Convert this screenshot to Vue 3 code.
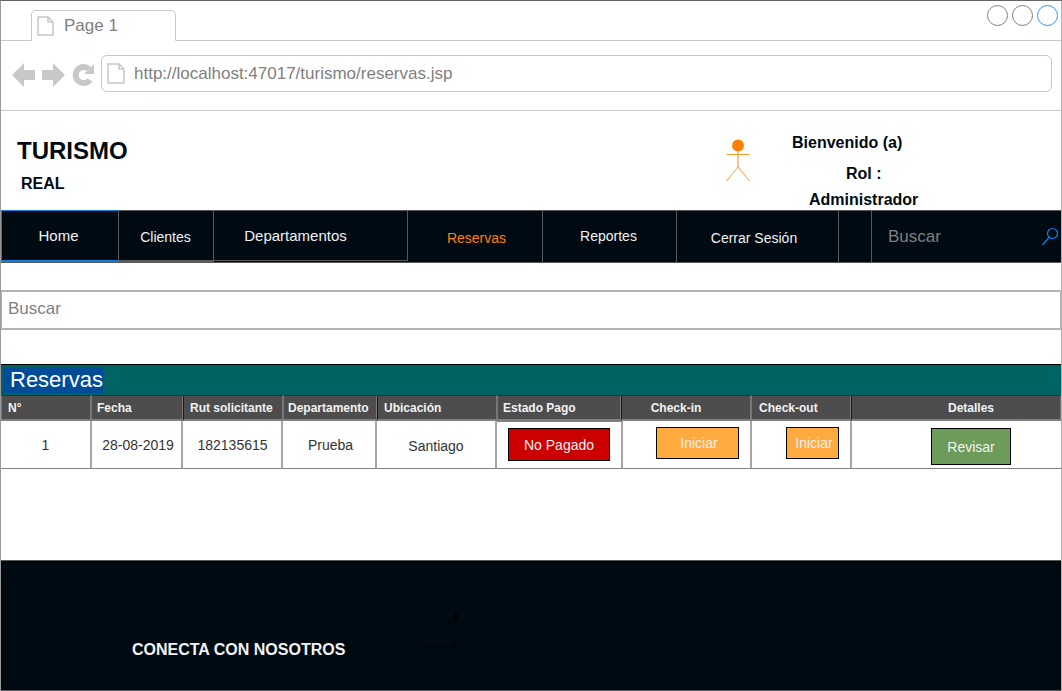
<script setup>
const navItems = [
  { label: 'Home', cls: 'home' },
  { label: 'Clientes', cls: 'clientes' },
  { label: 'Departamentos', cls: 'deptos' },
  { label: 'Reservas', cls: 'reservas' },
  { label: 'Reportes', cls: 'reportes' },
  { label: 'Cerrar Sesión', cls: 'cerrar' },
  { label: '', cls: 'blank' }
]
const headers = [
  { label: 'N°', cls: 'h-n' },
  { label: 'Fecha', cls: 'h-fecha' },
  { label: 'Rut solicitante', cls: 'h-rut' },
  { label: 'Departamento', cls: 'h-depto' },
  { label: 'Ubicación', cls: 'h-ubi' },
  { label: 'Estado Pago', cls: 'h-estado' },
  { label: 'Check-in', cls: 'h-in' },
  { label: 'Check-out', cls: 'h-out' },
  { label: 'Detalles', cls: 'h-det' }
]
const cells = [
  { label: '1', cls: 'c-n' },
  { label: '28-08-2019', cls: '' },
  { label: '182135615', cls: 'c-rut' },
  { label: 'Prueba', cls: '' },
  { label: 'Santiago', cls: 'c-ubi' }
]
</script>

<template>
  <div class="page">
    <div class="tabbar">
      <div class="tab">
        <svg class="doc" width="17" height="20" viewBox="0 0 17 20">
          <path d="M1 1H11L16 6V19H1Z M11 1V6H16" fill="#fff" stroke="#c8c8c8" stroke-width="1.5" />
        </svg>
        <span>Page 1</span>
      </div>
      <div class="winbtns">
        <span class="dot"></span>
        <span class="dot"></span>
        <span class="dot blue"></span>
      </div>
    </div>

    <div class="toolbar">
      <svg class="navicons" width="84" height="26" viewBox="0 0 84 26">
        <path d="M0 13L12 1V8H23V18H12V25Z" fill="#c8c8c8" />
        <path d="M53 13L41 1V8H30V18H41V25Z" fill="#c8c8c8" />
        <path d="M77 7A8 8 0 1 0 78 18" fill="none" stroke="#c8c8c8" stroke-width="6" />
        <path d="M82 2V12H72Z" fill="#c8c8c8" />
      </svg>
      <div class="address">
        <svg class="doc" width="18" height="21" viewBox="0 0 18 21">
          <path d="M1 1H12L17 6V20H1Z M12 1V6H17" fill="#fff" stroke="#c8c8c8" stroke-width="1.500" />
        </svg>
        <span>http://localhost:47017/turismo/reservas.jsp</span>
      </div>
    </div>

    <header class="brand">
      <div class="logo">
        <div class="logo-main">TURISMO</div>
        <div class="logo-sub">REAL</div>
      </div>
      <svg class="actor" width="26" height="44" viewBox="0 0 26 44">
        <circle cx="13" cy="6.500" r="6" fill="#ff8000" />
        <path d="M13 12V29" stroke="#ffb366" stroke-width="1.500" fill="none" />
        <path d="M1.500 15.500H24.500M1.500 42L13 28L24.500 42" stroke="#ff9a33" stroke-width="1" fill="none" />
      </svg>
      <div class="welcome">
        <div class="w-hello">Bienvenido (a)</div>
        <div class="w-rol">Rol :</div>
        <div class="w-admin">Administrador</div>
      </div>
    </header>

    <nav class="nav">
      <div v-for="item in navItems" :key="item.cls" class="nav-item" :class="item.cls">{{ item.label }}</div>
      <div class="nav-search">
        <span>Buscar</span>
        <svg width="18" height="20" viewBox="0 0 18 20">
          <circle cx="11.500" cy="6.500" r="5" fill="none" stroke="#0a7fe0" stroke-width="1.200" />
          <path d="M8 10.500L1.500 18" stroke="#0a7fe0" stroke-width="1.200" />
        </svg>
      </div>
    </nav>

    <div class="search">Buscar</div>

    <section class="panel">
      <div class="panel-title"><span>Reservas</span></div>
      <div class="thead">
        <div v-for="h in headers" :key="h.label" class="th" :class="h.cls">{{ h.label }}</div>
      </div>
      <div class="tbody">
        <div v-for="c in cells" :key="c.label" class="td" :class="c.cls">{{ c.label }}</div>
        <div class="td c-estado"><span class="btn red">No Pagado</span></div>
        <div class="td c-in"><span class="btn orange wide">Iniciar</span></div>
        <div class="td c-out"><span class="btn orange narrow">Iniciar</span></div>
        <div class="td c-det"><span class="btn green">Revisar</span></div>
      </div>
    </section>

    <footer class="footer">
      <span>CONECTA CON NOSOTROS</span>
      <svg width="40" height="38" viewBox="0 0 40 38">
        <path d="M0 36H37V6" fill="none" stroke="#000" stroke-width="1" />
        <path d="M33.500 7L37 0L40.500 7Z" fill="#000" />
      </svg>
    </footer>
  </div>
</template>

<style>
html, body { margin: 0; background: #fff; }
</style>

<style scoped>
.page {
  box-sizing: border-box;
  width: 1062px;
  height: 691px;
  overflow: hidden;
  background: #fff;
  border-top: 1px solid #666;
  border-left: 1px solid #999;
  border-right: 1px solid #b3b3b3;
  font-family: "Liberation Sans", Arial, sans-serif;
  color: #000a12;
  display: flex;
  flex-direction: column;
}
.tabbar {
  box-sizing: border-box;
  height: 40px;
  flex: none;
  border-bottom: 1px solid #c8c8c8;
  display: flex;
  justify-content: space-between;
  padding: 9px 0 0 30px;
}
.tab {
  box-sizing: border-box;
  width: 145px;
  height: 31px;
  border: 1px solid #c8c8c8;
  border-bottom: 1px solid #fff;
  border-radius: 5px 5px 0 0;
  display: flex;
  align-items: center;
  color: #808080;
  font-size: 17px;
  padding: 1px 0 0 5px;
}
.tab .doc { margin-right: 10px; }
.winbtns {
  display: flex;
  gap: 4px;
  margin: -5px 3px 0 0;
}
.dot {
  box-sizing: border-box;
  width: 21px;
  height: 21px;
  border: 1px solid #808080;
  border-radius: 50%;
}
.dot.blue { border-color: #2f9be8; }
.toolbar {
  box-sizing: border-box;
  height: 70px;
  flex: none;
  border-bottom: 1px solid #c8c8c8;
  display: flex;
  align-items: flex-start;
  padding: 14px 9px 0 11px;
}
.navicons { margin: 7px 5px 0 0; flex: none; }
.address {
  box-sizing: border-box;
  flex: 1;
  height: 37px;
  border: 1px solid #c8c8c8;
  border-radius: 6px;
  display: flex;
  align-items: center;
  padding-left: 5px;
  color: #808080;
  font-size: 17px;
}
.address .doc { margin-right: 9px; }
.brand {
  height: 99px;
  flex: none;
  display: flex;
  align-items: flex-start;
  font-weight: bold;
}
.logo { width: 709px; padding: 26px 0 0 16px; box-sizing: border-box; flex: none; }
.logo-main { font-size: 24px; line-height: 28px; }
.logo-sub { font-size: 16px; line-height: 18px; margin: 10px 0 0 4px; }
.actor { flex: none; margin: 28px 0 0 15px; }
.welcome {
  width: 140px;
  margin-left: 41px;
  font-size: 16px;
  line-height: 18px;
  text-align: left;
}
.w-hello { padding-top: 23px; white-space: nowrap; }
.w-rol { padding-top: 13px; margin-left: 54px; }
.w-admin { padding-top: 8px; margin-left: 17px; white-space: nowrap; }
.nav {
  box-sizing: border-box;
  height: 53px;
  flex: none;
  background: #000a12;
  border-top: 1px solid #5a5a5a;
  border-bottom: 1px solid #5a5a5a;
  display: flex;
  color: #f2f2f2;
}
.nav-item {
  box-sizing: border-box;
  flex: none;
  display: flex;
  align-items: center;
  justify-content: center;
  border-right: 1px solid #5a5a5a;
  font-size: 14px;
}
.home {
  width: 118px;
  height: 52px;
  margin-top: -1px;
  font-size: 15px;
  padding: 0 3px 0 0;
  border-bottom: 2px solid #0a7fe0;
  border-right: 1px solid #5a5a5a;
  border-left: 1px solid #0a7fe0;
  border-top: 1px solid #0a7fe0;
}
.clientes { width: 95px; padding: 3px 1px 0 0; height: 51px; border-bottom: 2px solid #5a5a5a; }
.deptos { width: 194px; font-size: 15px; padding: 0 30px 0 0; height: 50px; border-bottom: 1px solid #5a5a5a; }
.reservas { width: 135px; color: #ff8000; padding: 3px 0 0 3px; }
.reportes { width: 134px; padding: 0 2px 2px 0; }
.cerrar { width: 162px; padding: 2px 7px 0 0; }
.blank { width: 33px; }
.nav-search {
  flex: 1;
  display: flex;
  align-items: center;
  justify-content: space-between;
  padding: 0 2px 0 16px;
  color: #808080;
  font-size: 17px;
}
.search {
  box-sizing: border-box;
  height: 40px;
  flex: none;
  margin-top: 27px;
  border: 2px solid #b3b3b3;
  border-left-width: 1px;
  border-right-width: 1px;
  color: #808080;
  font-size: 17px;
  display: flex;
  align-items: center;
  padding: 0 0 2px 6px;
}
.panel { margin-top: 34px; flex: none; height: 196px; }
.panel-title {
  box-sizing: border-box;
  height: 31px;
  background: #006363;
  border-top: 1px solid #000;
  padding: 2px 0 0 2px;
}
.panel-title span {
  display: inline-block;
  height: 26px;
  line-height: 26px;
  background: #004c99;
  color: #fff;
  font-size: 22px;
  padding: 0 0 0 7px;
}
.thead, .tbody { display: grid; }
.thead {
  height: 26px;
  grid-template-columns: 90px 92px 100px 94px 120px 124px 130px 100px 1fr;
}
.tbody {
  height: 47px;
  grid-template-columns: 91px 91px 100px 94px 120px 126px 129px 100px 1fr;
}
.th {
  box-sizing: border-box;
  background: #4d4d4d;
  color: #f2f2f2;
  border: 1px solid #777;
  border-top-color: #2a2a2a;
  border-bottom: 2px solid #808080;
  font-size: 12px;
  font-weight: bold;
  display: flex;
  align-items: center;
  padding: 0 0 0 5px;
  white-space: nowrap;
}
.h-rut, .h-ubi, .h-in, .h-det { border-left-color: #1a1a1a; }
.h-n, .h-rut, .h-ubi { padding-left: 6px; }
.h-depto { padding-left: 4px; }
.h-out { padding-left: 7px; }
.h-in { justify-content: center; padding: 0 20px 0 0; }
.h-det { justify-content: center; padding: 0 0 0 30px; }
.td {
  box-sizing: border-box;
  border-right: 2px solid #a6a6a6;
  border-bottom: 1px solid #808080;
  font-size: 14px;
  color: #333;
  display: flex;
  align-items: center;
  justify-content: center;
  padding: 0 0 0 3px;
}
.c-n { padding-left: 0; }
.c-rut { padding-left: 1px; }
.c-ubi { padding: 2px 0 0 0; }
.c-estado { padding: 6px 0 0 11px; align-items: flex-start; justify-content: flex-start; height: 48px; border-top: 1px solid #808080; }
.c-in { padding: 6px 0 0 33px; align-items: flex-start; justify-content: flex-start; }
.c-out { padding: 6px 0 0 34px; align-items: flex-start; justify-content: flex-start; }
.c-det { padding: 7px 0 0 79px; align-items: flex-start; justify-content: flex-start; border-right: 0; }
.btn {
  box-sizing: border-box;
  display: flex;
  align-items: center;
  justify-content: center;
  color: #f2f2f2;
  border: 1px solid #000;
  flex: none;
}
.red { width: 102px; height: 33px; background: #cc0000; }
.orange { height: 32px; background: #ffab40; padding: 0 0 1px 3px; }
.wide { width: 83px; }
.narrow { width: 53px; }
.green { width: 80px; height: 37px; background: #6d9b5a; padding-top: 1px; }
.footer {
  box-sizing: border-box;
  height: 131px;
  flex: none;
  background: #000a12;
  border-top: 1px solid #5a5a5a;
  border-bottom: 1px solid #5a5a5a;
  color: #f2f2f2;
  font-size: 16px;
  font-weight: bold;
  display: flex;
  align-items: flex-start;
  padding: 50px 0 0 131px;
}
.footer span { margin-top: 30px; }
.footer svg { margin-left: 74px; flex: none; }
</style>
